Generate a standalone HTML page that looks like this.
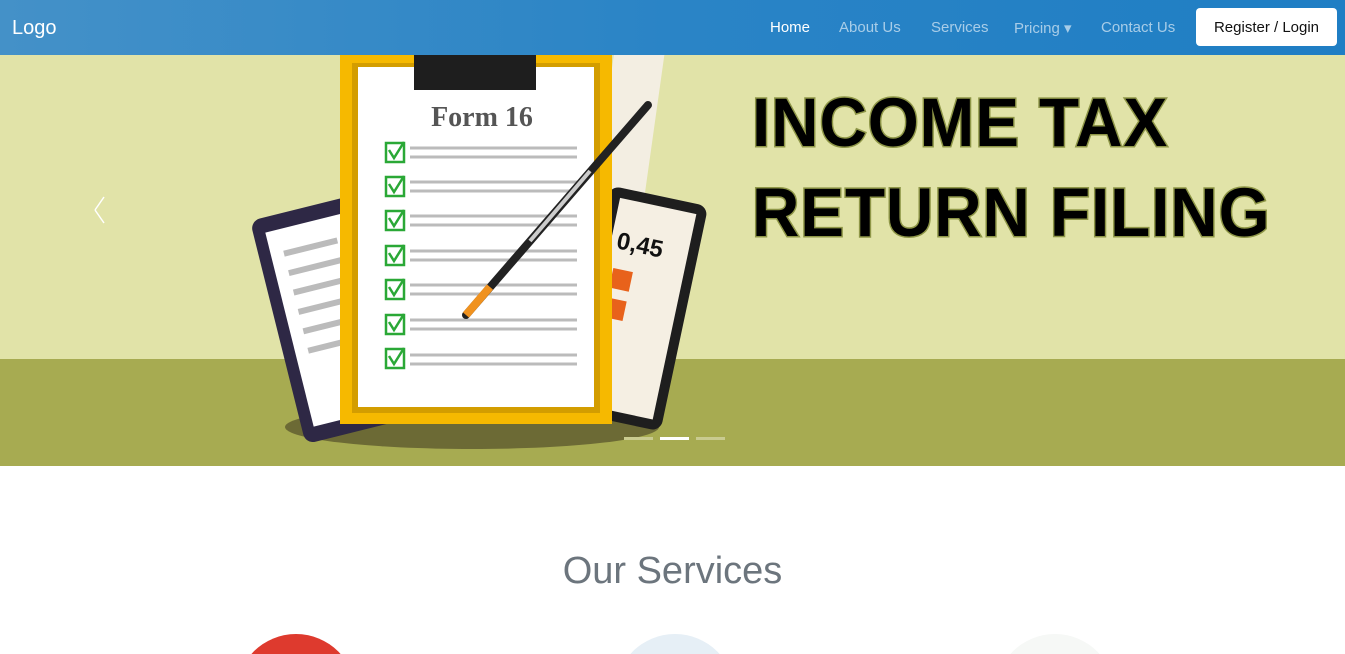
<!DOCTYPE html>
<html><head><style>
*{margin:0;padding:0;box-sizing:border-box}
html,body{width:1345px;height:654px;overflow:hidden}
body{background:#fff;font-family:"Liberation Sans",sans-serif;position:relative}
.nav{position:absolute;left:0;top:0;width:1345px;height:55px;background:linear-gradient(90deg,#4491c8,#2a84c6 50%,#1f7ec4)}
.logo{position:absolute;left:12px;top:17px;color:#fff;font-size:20px}
.nav a{position:absolute;top:19px;font-size:15px;color:rgba(255,255,255,.6);text-decoration:none}
.btn{position:absolute;left:1196px;top:8px;width:141px;height:38px;background:#fff;border-radius:4px;color:#111;font-size:15px;text-align:center;line-height:40px}
.banner{position:absolute;left:0;top:55px;width:1345px;height:411px;background:#e1e3a8;overflow:hidden}
.ground{position:absolute;left:0;top:304px;width:1345px;height:107px;background:#a7ab51}
.big{position:absolute;left:752px;font:bold 69px "Liberation Sans",sans-serif;color:#000;-webkit-text-stroke:3px #8e9647;paint-order:stroke fill;letter-spacing:1px;transform:scaleX(.95);transform-origin:left}
h2{position:absolute;top:550px;width:100%;text-align:center;font-size:38px;color:#6c757d;font-weight:normal}
.c{position:absolute;top:634px;width:120px;height:120px;border-radius:50%}
</style></head><body>
<div class="nav">
<div class="logo">Logo</div>
<a style="left:770px;color:#fff">Home</a>
<a style="left:839px">About Us</a>
<a style="left:931px">Services</a>
<a style="left:1014px">Pricing ▾</a>
<a style="left:1101px">Contact Us</a>
<div class="btn">Register / Login</div>
</div>
<div class="banner">
<div class="ground"></div>
<svg width="1345" height="411" style="position:absolute;left:0;top:0">
<ellipse cx="472" cy="372" rx="187" ry="22" fill="#6c6a35"/>
<g transform="rotate(-14 330 280)"><rect x="280" y="150" width="110" height="230" rx="10" fill="#2e2845"/><rect x="292" y="165" width="90" height="200" fill="#fff"/>
<g stroke="#bbb" stroke-width="6"><path d="M305 190H360M305 210H360M305 230H360M305 250H360M305 270H360M305 290H360"/></g></g>
<rect x="600" y="-10" width="50" height="230" fill="#f3eee2" transform="rotate(8 620 100)"/>
<g transform="rotate(12 640 280)"><rect x="580" y="140" width="100" height="230" rx="10" fill="#1e1e1e"/><rect x="592" y="150" width="78" height="210" fill="#f5efe3"/><text x="598" y="200" font-size="24" font-weight="bold" fill="#111">0,45</text><rect x="600" y="220" width="20" height="20" fill="#e8621b"/><rect x="600" y="250" width="20" height="20" fill="#e8621b"/></g>
<rect x="340" y="0" width="272" height="369" fill="#f6b900"/>
<rect x="352" y="8" width="248" height="350" fill="#d39d00"/>
<rect x="358" y="12" width="236" height="340" fill="#fff"/>
<rect x="414" y="0" width="122" height="35" fill="#1e1e1e"/>
<text x="482" y="71" text-anchor="middle" font-family="Liberation Serif,serif" font-weight="bold" font-size="28" fill="#555">Form 16</text>
<g fill="none" stroke="#2aa836" stroke-width="2.5">
<rect x="386" y="88" width="18" height="19"/><rect x="386" y="122" width="18" height="19"/><rect x="386" y="156" width="18" height="19"/><rect x="386" y="191" width="18" height="19"/><rect x="386" y="225" width="18" height="19"/><rect x="386" y="260" width="18" height="19"/><rect x="386" y="294" width="18" height="19"/></g>
<g fill="none" stroke="#2aa836" stroke-width="2.5">
<path d="M389 95l5 8 10-16M389 129l5 8 10-16M389 163l5 8 10-16M389 198l5 8 10-16M389 232l5 8 10-16M389 267l5 8 10-16M389 301l5 8 10-16"/></g>
<g stroke="#bbb" stroke-width="3">
<path d="M410 93H577M410 102H577M410 127H577M410 136H577M410 161H577M410 170H577M410 196H577M410 205H577M410 230H577M410 239H577M410 265H577M410 274H577M410 300H577M410 309H577"/></g>
<line x1="466" y1="260" x2="648" y2="50" stroke="#222" stroke-width="8" stroke-linecap="round"/>
<line x1="530" y1="186" x2="590" y2="116" stroke="#ccc" stroke-width="4"/>
<line x1="466" y1="260" x2="490" y2="232" stroke="#f0921f" stroke-width="8"/>
<line x1="104" y1="142" x2="95" y2="155" stroke="#fff" stroke-width="1.5"/><line x1="95" y1="155" x2="104" y2="168" stroke="#fff" stroke-width="1.5"/>
<rect x="624" y="382" width="29" height="3" fill="#c9cb90"/><rect x="660" y="382" width="29" height="3" fill="#fff"/><rect x="696" y="382" width="29" height="3" fill="#c9cb90"/>
</svg>
<div class="big" style="top:28px">INCOME TAX</div>
<div class="big" style="top:118px">RETURN FILING</div>
</div>
<h2>Our Services</h2>
<div class="c" style="left:236px;background:#de3a2e"></div>
<div class="c" style="left:615px;background:#e6eff6"></div>
<div class="c" style="left:995px;background:#f6f8f6"></div>
</body></html>
